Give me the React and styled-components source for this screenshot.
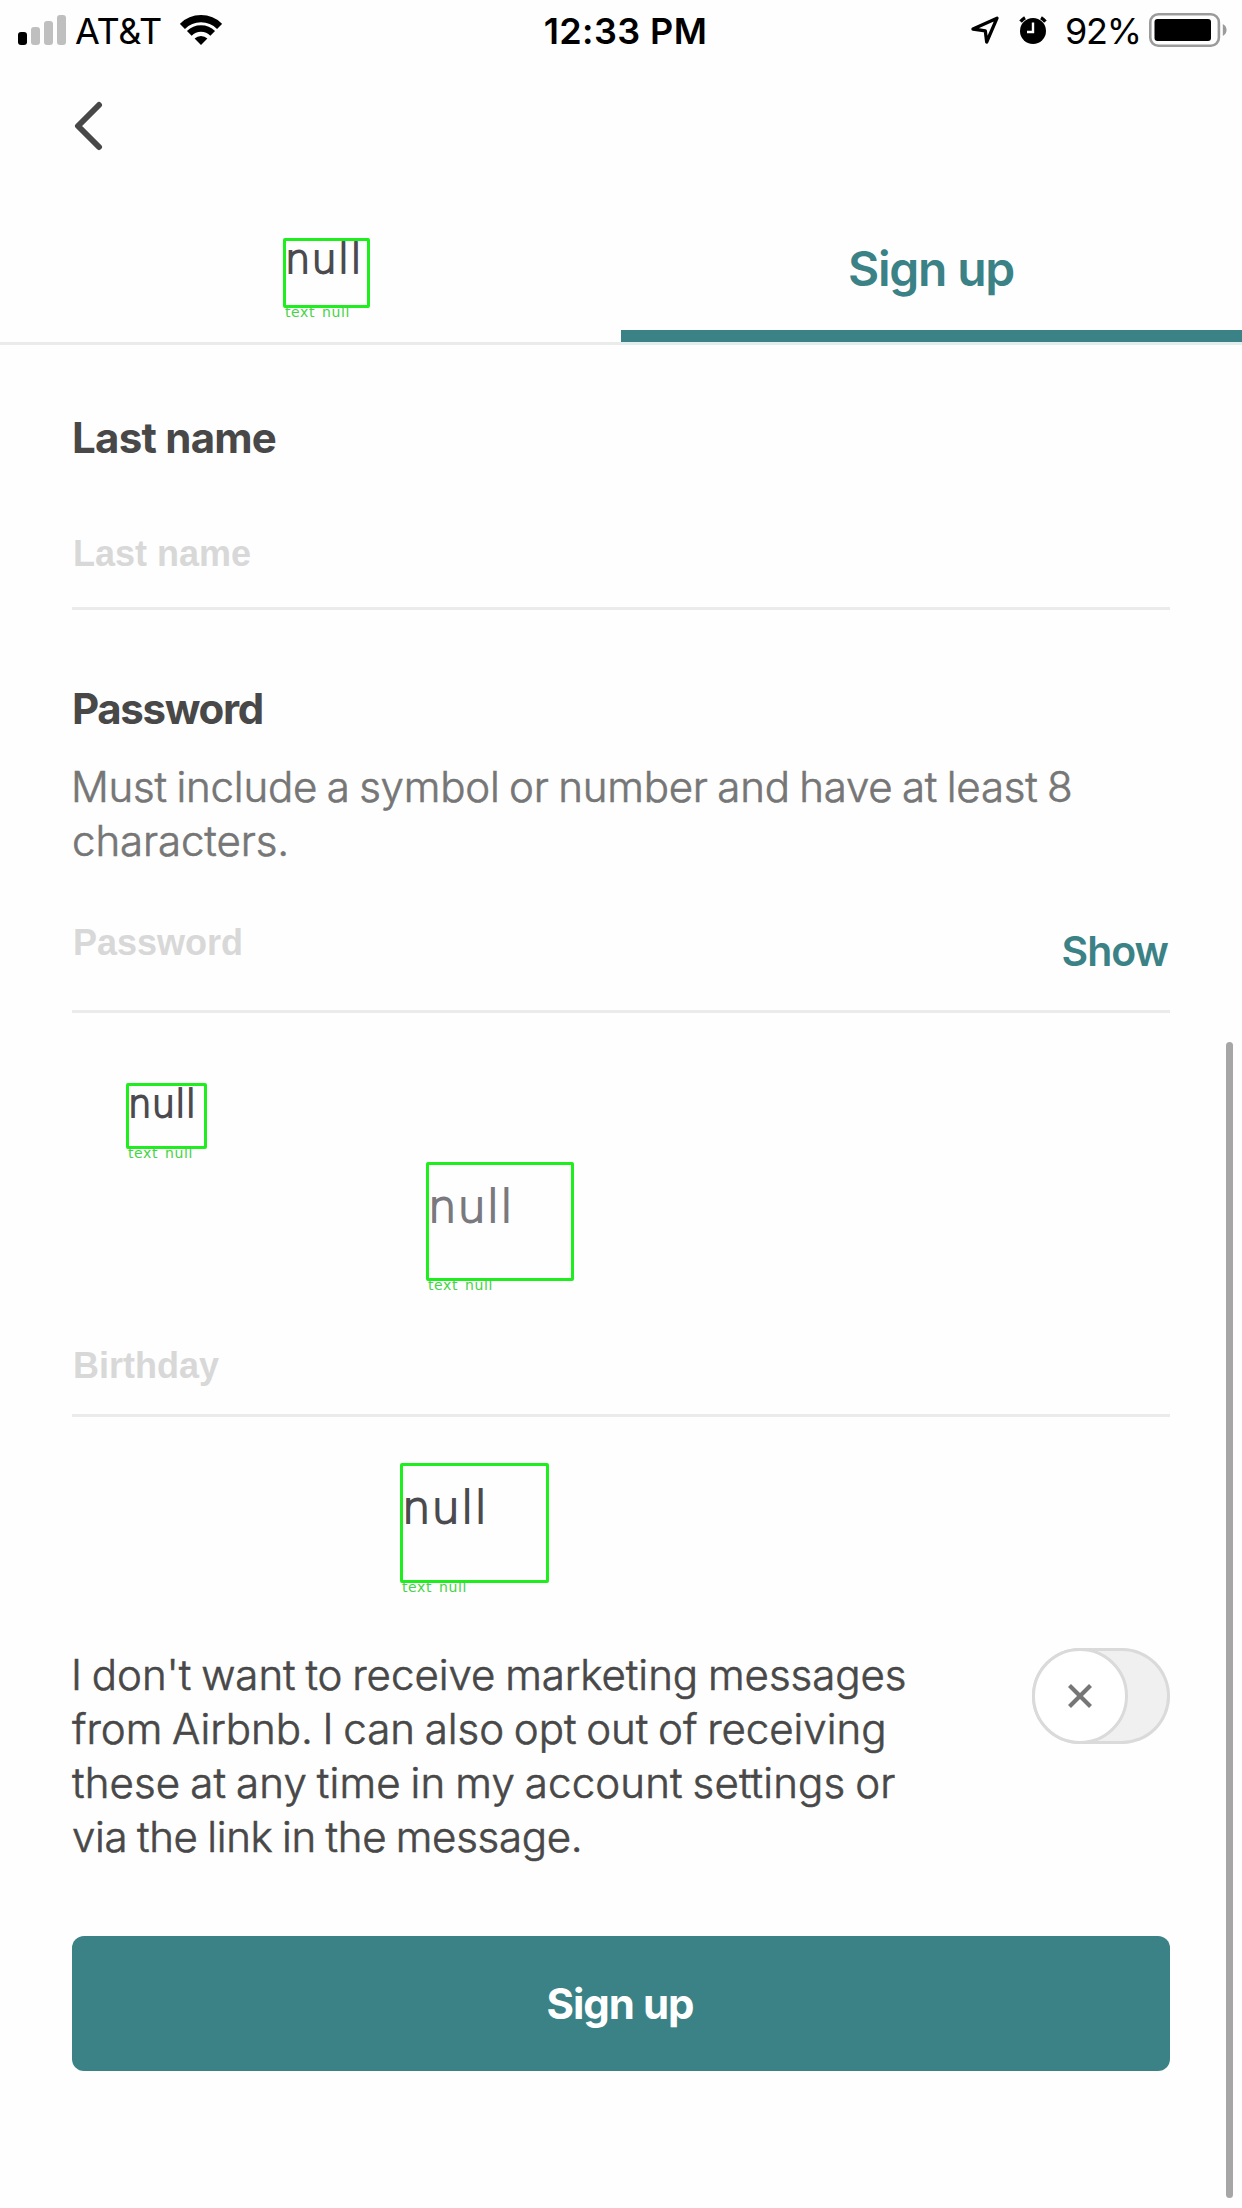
import React from 'react';
import styled, { createGlobalStyle } from 'styled-components';

const Global = createGlobalStyle`
  * { box-sizing: border-box; }
  body { margin: 0; background: #fefefe; }
`;

const teal = '#3b8287';
const ink = '#484848';

const Screen = styled.div`
  position: relative;
  width: 1242px;
  height: 2208px;
  overflow: hidden;
  background: #fefefe;
  color: ${ink};
  font-family: Inter, "Liberation Sans", sans-serif;
`;

const StatusBar = styled.header`
  display: grid;
  grid-template-columns: 1fr auto 1fr;
  align-items: center;
  height: 60px;
  padding: 0 15px 0 18px;
  color: #000;
`;

const StatusGroup = styled.div`
  display: flex;
  align-items: center;
  justify-content: ${(p) => (p.$end ? 'flex-end' : 'flex-start')};
`;

const StatusText = styled.span`
  padding-top: 2px;
  font-size: 36px;
  line-height: 44px;
  font-weight: ${(p) => p.$weight || 400};
  letter-spacing: ${(p) => p.$track || 0}px;
  margin: ${(p) => p.$margin || 0};
  white-space: nowrap;
`;

const Bars = styled.div`
  display: flex;
  align-items: flex-end;
  gap: 4px;
  height: 30px;
`;

const Bar = styled.i`
  width: 9px;
  height: ${(p) => p.$h}px;
  border-radius: 3px;
  background: ${(p) => (p.$on ? '#000' : '#bfbfbf')};
`;

const Glyph = styled.svg`
  display: block;
  flex: none;
  margin: ${(p) => p.$margin || 0};
`;

const NavBar = styled.nav`
  display: flex;
  align-items: center;
  height: 132px;
  padding-left: 72px;
`;

const BackButton = styled.button`
  padding: 0;
  border: 0;
  background: none;
`;

const Tabs = styled.div`
  display: grid;
  grid-template-columns: 1fr 1fr;
  height: 153px;
  border-bottom: 3px solid #ebebeb;
`;

const Tab = styled.div`
  display: flex;
  align-items: flex-start;
`;

const ActiveTab = styled(Tab)`
  align-items: center;
  justify-content: center;
  padding: 2px 1px 0 0;
  box-shadow: inset 0 -12px ${teal}, 0 3px #e3eded;
  color: ${teal};
  font-size: 48px;
  font-weight: 600;
  letter-spacing: -1.2px;
`;

const Form = styled.main`
  display: flex;
  flex-direction: column;
  padding: 66px 72px 0;
`;

const Label = styled.label`
  display: block;
  font-size: 42px;
  line-height: 54px;
  font-weight: 700;
  letter-spacing: ${(p) => p.$track}px;
`;

const Copy = styled.div`
  display: flex;
  flex-direction: column;
  font-size: 42px;
  line-height: 54px;
  font-weight: 300;
  word-spacing: -2px;
  -webkit-text-stroke: 0.6px currentColor;
  color: ${(p) => p.$color || ink};
  margin-top: ${(p) => p.$top || 0}px;
`;

const Line = styled.span`
  white-space: nowrap;
  letter-spacing: ${(p) => p.$track}px;
  margin-left: ${(p) => p.$shift || 0}px;
`;

const Field = styled.div`
  display: flex;
  justify-content: space-between;
  align-items: flex-start;
  height: ${(p) => p.$h}px;
  padding: ${(p) => p.$pad}px 2px 0 1px;
  margin-bottom: ${(p) => p.$after || 0}px;
  border-bottom: 3px solid #ebebeb;
`;

const Placeholder = styled.span`
  font: 700 36px/54px "Liberation Sans", Arial, sans-serif;
  color: #d8d8d8;
`;

const ShowLink = styled.span`
  margin-top: 8px;
  font-size: 41px;
  line-height: 54px;
  font-weight: 600;
  letter-spacing: -1px;
  color: ${teal};
`;

const Box = styled.div`
  position: relative;
  flex: none;
  width: ${(p) => p.$w}px;
  height: ${(p) => p.$h}px;
  margin: ${(p) => p.$margin};
  border: 3px solid #1eee1e;
  border-radius: 2px;
`;

const BoxText = styled.div`
  margin-top: ${(p) => p.$top}px;
  margin-left: -1px;
  font-family: "DejaVu Sans", sans-serif;
  font-weight: 200;
  font-size: ${(p) => p.$size}px;
  line-height: 1;
  letter-spacing: ${(p) => p.$track}px;
  color: ${(p) => p.$color};
  -webkit-text-stroke: 1.8px ${(p) => p.$color};
`;

const BoxTag = styled.span`
  position: absolute;
  left: -1px;
  top: 100%;
  font-family: "DejaVu Sans", sans-serif;
  font-size: 14px;
  line-height: 14px;
  letter-spacing: 0.6px;
  word-spacing: 2px;
  white-space: nowrap;
  color: #45d345;
`;

const Consent = styled.div`
  display: flex;
  justify-content: space-between;
  align-items: flex-start;
  margin-top: 65px;
`;

const Toggle = styled.div`
  width: 138px;
  height: 96px;
  border-radius: 48px;
  background: #f0f0f0;
  box-shadow: inset 0 0 0 3px #dadada;
`;

const Knob = styled.div`
  display: flex;
  align-items: center;
  justify-content: center;
  width: 96px;
  height: 96px;
  border: 3px solid #dadada;
  border-radius: 50%;
  background: #fff;
`;

const Submit = styled.button`
  height: 135px;
  margin-top: 72px;
  padding: 1px 2px 0 0;
  border: 0;
  border-radius: 12px;
  background: ${teal};
  color: #fff;
  font: 700 42px/54px Inter, sans-serif;
  letter-spacing: -1px;
`;

const ScrollThumb = styled.div`
  position: absolute;
  top: 1042px;
  right: 9px;
  bottom: 10px;
  width: 7px;
  border-radius: 4px;
  background: #a6a6a6;
`;

function NullBox({ w, h, margin, size, top, track, color = '#4b4b4f' }) {
  return (
    <Box $w={w} $h={h} $margin={margin}>
      <BoxText $size={size} $top={top} $track={track} $color={color}>null</BoxText>
      <BoxTag>text null</BoxTag>
    </Box>
  );
}

export default function App() {
  return (
    <Screen>
      <Global />
      <StatusBar>
        <StatusGroup>
          <Bars>
            <Bar $h={13} $on />
            <Bar $h={18} />
            <Bar $h={24} />
            <Bar $h={30} />
          </Bars>
          <StatusText $margin="0 0 0 9px" $track={-0.3}>AT&amp;T</StatusText>
          <Glyph $margin="0 0 0 18px" width="42" height="30" viewBox="0 0 42 30">
            <g fill="none" stroke="#000">
              <path d="M2.4 11.4a26.3 26.3 0 0 1 37.2 0" strokeWidth="7.2" />
              <path d="M9.3 18.3a16.5 16.5 0 0 1 23.4 0" strokeWidth="6.6" />
            </g>
            <path d="M21 30l-6.4-6.4a9.2 9.2 0 0 1 12.8 0z" />
          </Glyph>
        </StatusGroup>
        <StatusText $weight={600} $track={0.4} $margin="0 0 0 6px">12:33 PM</StatusText>
        <StatusGroup $end>
          <Glyph width="28" height="28" viewBox="0 0 28 28">
            <path d="M2 13L26 2.2L15.7 26L14.3 14.8z" fill="none" stroke="#000" strokeWidth="3.3" strokeLinejoin="round" />
          </Glyph>
          <Glyph $margin="0 0 0 20px" width="28" height="28" viewBox="0 0 28 28">
            <circle cx="14" cy="15" r="13" />
            <path d="M1.6 5.6A16 16 0 0 1 6 1.8M26.4 5.6A16 16 0 0 0 22 1.8" stroke="#000" strokeWidth="3.4" fill="none" />
            <path d="M14 6.5V16H8" fill="none" stroke="#fff" strokeWidth="2.4" />
          </Glyph>
          <StatusText $margin="0 8px 0 18px" $track={-1.2}>92%</StatusText>
          <Glyph width="78" height="34" viewBox="0 0 78 34">
            <rect x="1.3" y="1.3" width="68.6" height="31.4" rx="8" fill="none" stroke="#9b9b9b" strokeWidth="2.6" />
            <rect x="5.5" y="6" width="56.5" height="22" rx="3" />
            <path d="M73.8 11c5 2.500 5 9.500 0 12z" fill="#9b9b9b" />
          </Glyph>
        </StatusGroup>
      </StatusBar>

      <NavBar>
        <BackButton aria-label="Back">
          <Glyph width="34" height="50" viewBox="0 0 34 50">
            <path d="M27 4L6 25l21 21" fill="none" stroke={ink} strokeWidth="6" strokeLinecap="round" strokeLinejoin="round" />
          </Glyph>
        </BackButton>
      </NavBar>

      <Tabs>
        <Tab>
          <NullBox w={87} h={70} margin="46px 0 0 283px" size={40} top={-2} track={1.2} />
        </Tab>
        <ActiveTab>Sign up</ActiveTab>
      </Tabs>

      <Form>
        <Label $track={-0.75}>Last name</Label>
        <Field $h={145} $pad={62} $after={72}>
          <Placeholder>Last name</Placeholder>
        </Field>

        <Label $track={-1.35}>Password</Label>
        <Copy $color="#767676" $top={24}>
          <Line $track={-0.22} $shift={-1}>Must include a symbol or number and have at least 8</Line>
          <Line $track={-0.1}>characters.</Line>
        </Copy>
        <Field $h={145} $pad={48}>
          <Placeholder>Password</Placeholder>
          <ShowLink>Show</ShowLink>
        </Field>

        <NullBox w={81} h={66} margin="70px 0 0 54px" size={37} top={0} track={0.2} />
        <NullBox w={148} h={119} margin="13px 0 0 354px" size={45} top={19} track={0.9} color="#7a7a7e" />
        <Field $h={136} $pad={58}>
          <Placeholder>Birthday</Placeholder>
        </Field>
        <NullBox w={149} h={120} margin="46px 0 0 328px" size={45} top={19} track={1} />

        <Consent>
          <Copy>
            <Line $track={-0.02} $shift={-1}>I don't want to receive marketing messages</Line>
            <Line $track={-0.03}>from Airbnb. I can also opt out of receiving</Line>
            <Line $track={0.13}>these at any time in my account settings or</Line>
            <Line $track={-0.29}>via the link in the message.</Line>
          </Copy>
          <Toggle>
            <Knob>
              <Glyph width="24" height="24" viewBox="0 0 24 24">
                <path d="M1.500 1.500l21 21M22.500 1.500l-21 21" stroke="#767676" strokeWidth="4.2" />
              </Glyph>
            </Knob>
          </Toggle>
        </Consent>

        <Submit>Sign up</Submit>
      </Form>
      <ScrollThumb />
    </Screen>
  );
}
